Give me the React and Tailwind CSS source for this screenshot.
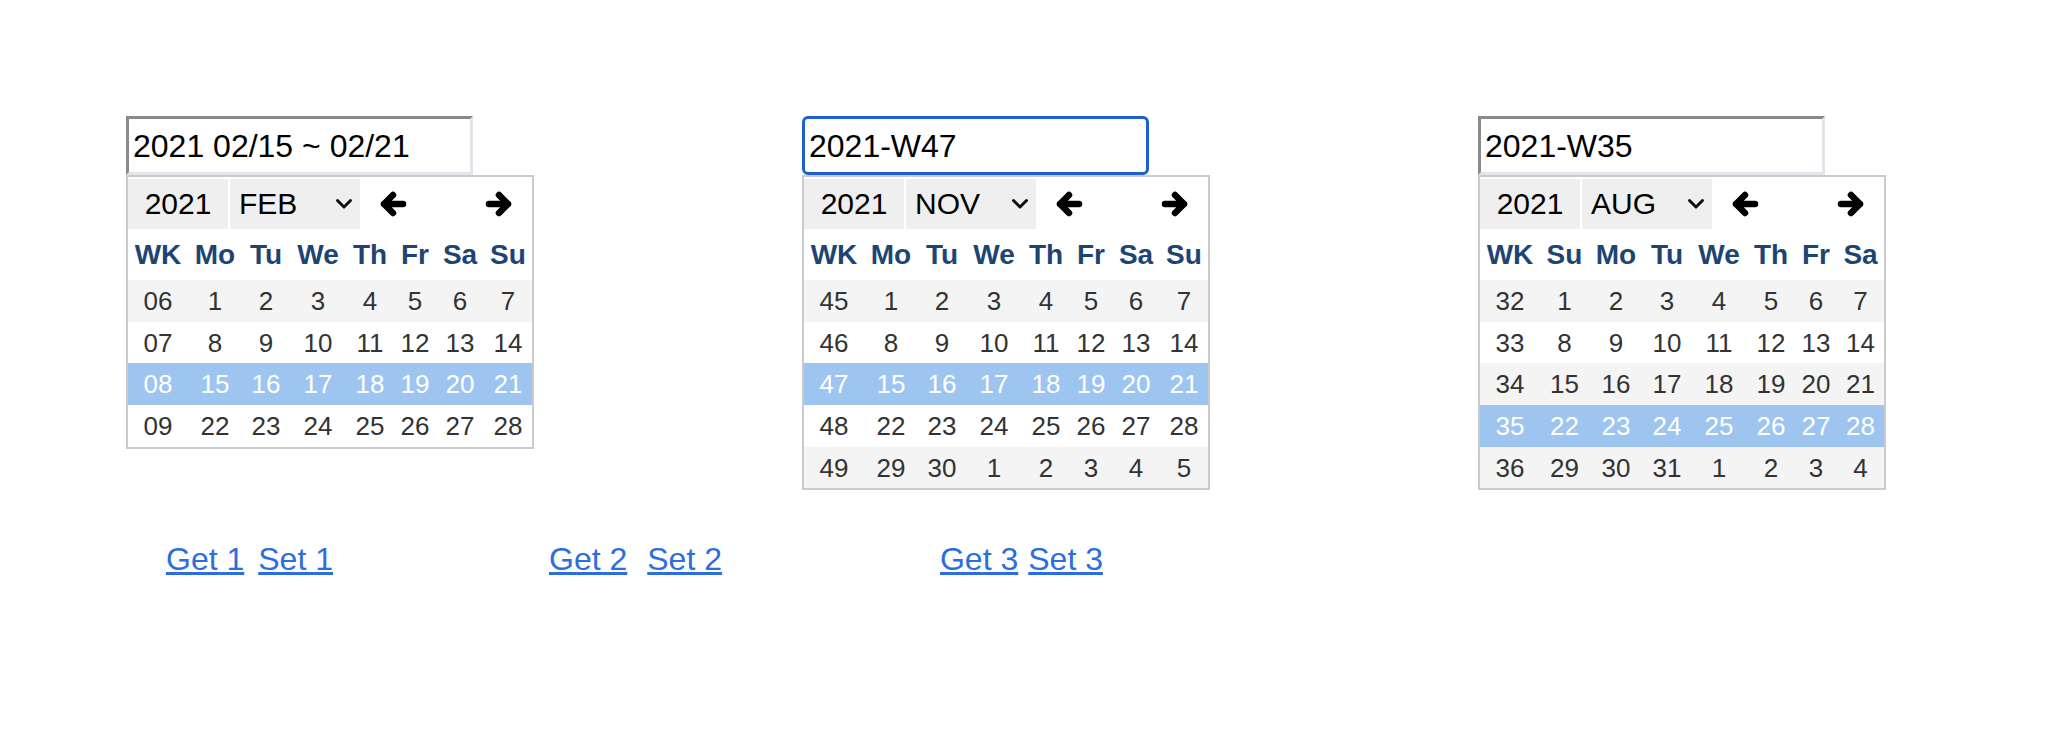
import React from "react";

function ArrowLeft() {
  return (
    <svg width="27" height="28" viewBox="0 0 27 28" fill="none">
      <path d="M4 14 H23 M4 14 L13 5 M4 14 L13 23" stroke="#000" strokeWidth="6.5" strokeLinecap="round" strokeLinejoin="round" />
    </svg>
  );
}

function ArrowRight() {
  return (
    <svg width="27" height="28" viewBox="0 0 27 28" fill="none">
      <path d="M23 14 H4 M23 14 L14 5 M23 14 L14 23" stroke="#000" strokeWidth="6.5" strokeLinecap="round" strokeLinejoin="round" />
    </svg>
  );
}

function Chevron() {
  return (
    <svg width="18" height="12" viewBox="0 0 18 12" fill="none">
      <path d="M2.5 2.5 L9 9 L15.5 2.5" stroke="#111" strokeWidth="3" strokeLinecap="round" strokeLinejoin="round" />
    </svg>
  );
}

function Calendar({ value, month, headers, cols, rows, focused }) {
  return (
    <div className="flex flex-col w-[408px]">
      <div
        className={
          focused
            ? "w-[347px] h-[59px] border-[3px] border-[#1b5fd0] rounded-[6px] flex items-center pl-[4px] text-[32px] leading-none text-black bg-white"
            : "w-[347px] h-[59px] border-[3px] border-t-[#8a8a8a] border-l-[#8a8a8a] border-b-[#e1e4e8] border-r-[#e1e4e8] flex items-center pl-[4px] text-[32px] leading-none text-black bg-white"
        }
      >
        {value}
      </div>
      <div className="w-[408px] border-2 border-[#cbcbcb] bg-white">
        <div className="flex pt-[2px] h-[52px]">
          <div className="w-[100px] h-[50px] bg-[#efefef] flex items-center justify-center text-[30px] leading-none text-black">
            2021
          </div>
          <div className="ml-[2px] w-[130px] h-[50px] bg-[#efefef] flex items-center justify-between pl-[9px] pr-[7px] text-[30px] leading-none text-black">
            <span>{month}</span>
            <Chevron />
          </div>
          <div className="flex-1 flex items-center justify-between px-[20px] h-[50px]">
            <ArrowLeft />
            <ArrowRight />
          </div>
        </div>
        <div className={"grid h-[51px] items-center text-[28px] font-bold text-[#1d4574] leading-none " + cols}>
          {headers.map((h) => (
            <div key={h} className="text-center">{h}</div>
          ))}
        </div>
        {rows.map((r, i) => (
          <div
            key={r.wk}
            className={
              "grid h-[41.7px] items-center text-[26px] leading-none " +
              cols +
              (r.sel ? " bg-[#9ec5f0] text-white" : i % 2 === 0 ? " bg-[#f4f4f4] text-[#333333]" : " bg-white text-[#333333]")
            }
          >
            <div className="text-center">{r.wk}</div>
            {r.days.map((d, j) => (
              <div key={j} className="text-center">{d}</div>
            ))}
          </div>
        ))}
      </div>
    </div>
  );
}

const colsA = "grid-cols-[60px_54px_48px_56px_48px_42px_48px_48px]";
const colsB = "grid-cols-[60px_49px_54px_48px_56px_48px_42px_47px]";
const hdrA = ["WK", "Mo", "Tu", "We", "Th", "Fr", "Sa", "Su"];
const hdrB = ["WK", "Su", "Mo", "Tu", "We", "Th", "Fr", "Sa"];

const rows1 = [
  { wk: "06", days: [1, 2, 3, 4, 5, 6, 7] },
  { wk: "07", days: [8, 9, 10, 11, 12, 13, 14] },
  { wk: "08", days: [15, 16, 17, 18, 19, 20, 21], sel: true },
  { wk: "09", days: [22, 23, 24, 25, 26, 27, 28] },
];
const rows2 = [
  { wk: "45", days: [1, 2, 3, 4, 5, 6, 7] },
  { wk: "46", days: [8, 9, 10, 11, 12, 13, 14] },
  { wk: "47", days: [15, 16, 17, 18, 19, 20, 21], sel: true },
  { wk: "48", days: [22, 23, 24, 25, 26, 27, 28] },
  { wk: "49", days: [29, 30, 1, 2, 3, 4, 5] },
];
const rows3 = [
  { wk: "32", days: [1, 2, 3, 4, 5, 6, 7] },
  { wk: "33", days: [8, 9, 10, 11, 12, 13, 14] },
  { wk: "34", days: [15, 16, 17, 18, 19, 20, 21] },
  { wk: "35", days: [22, 23, 24, 25, 26, 27, 28], sel: true },
  { wk: "36", days: [29, 30, 31, 1, 2, 3, 4] },
];

export default function App() {
  return (
    <div className="min-h-[742px] w-[2070px] bg-white pt-[116px] font-['Liberation_Sans',Arial,sans-serif]">
      <div className="flex items-start pl-[126px] gap-[268px]">
        <Calendar value="2021 02/15 ~ 02/21" month="FEB" headers={hdrA} cols={colsA} rows={rows1} />
        <Calendar value="2021-W47" month="NOV" headers={hdrA} cols={colsA} rows={rows2} focused />
        <Calendar value="2021-W35" month="AUG" headers={hdrB} cols={colsB} rows={rows3} />
      </div>
      <div className="flex mt-[51px] text-[32px] leading-[37px] text-[#2c6de0]">
        <a href="#" className="underline ml-[166px]">Get 1</a>
        <a href="#" className="underline ml-[14px]">Set 1</a>
        <a href="#" className="underline ml-[216px]">Get 2</a>
        <a href="#" className="underline ml-[20px]">Set 2</a>
        <a href="#" className="underline ml-[218px]">Get 3</a>
        <a href="#" className="underline ml-[10px]">Set 3</a>
      </div>
    </div>
  );
}
